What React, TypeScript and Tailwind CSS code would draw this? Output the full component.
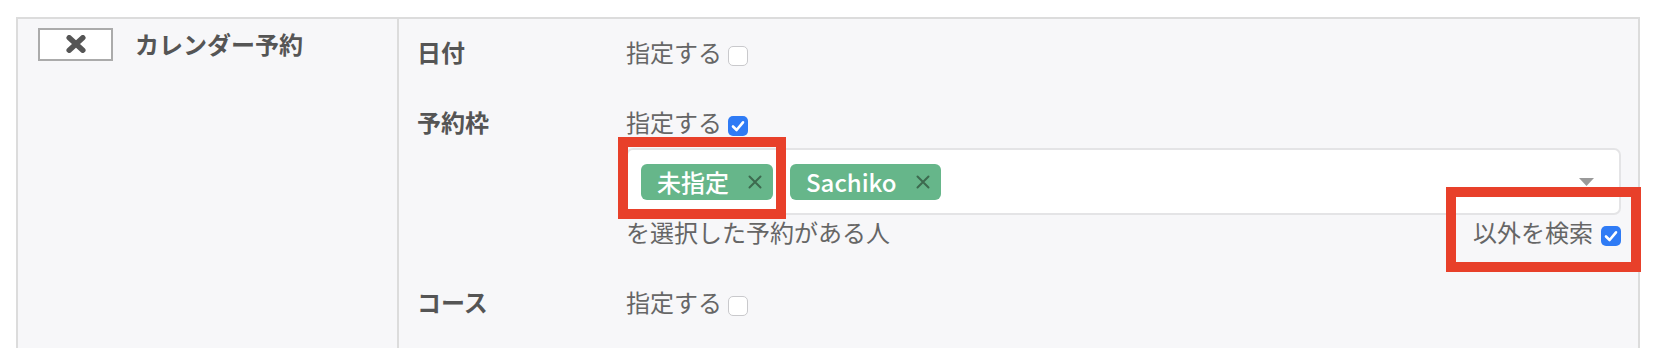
const font = { fontFamily: '"Noto Sans CJK JP", "Noto Sans", sans-serif' };

function Box({ checked = false }: { checked?: boolean }) {
  return checked ? (
    <span className="mt-[8px] grid h-[20px] w-[20px] shrink-0 place-items-center rounded-[5px] bg-[#2f7bf5]">
      <svg viewBox="0 0 20 20" className="h-[20px] w-[20px]">
        <path d="M5 10.5 L8.6 14 L15 6.3" fill="none" stroke="white" strokeWidth="2.6" strokeLinecap="round" strokeLinejoin="round" />
      </svg>
    </span>
  ) : (
    <span className="mt-[8px] h-[20px] w-[20px] shrink-0 rounded-[5px] border border-[#c9c9cc] bg-white" />
  );
}

function Chip({ label }: { label: string }) {
  return (
    <span className="flex h-[36px] items-center rounded-[6px] bg-[#66b68a] pl-[16px] pr-[11px] text-[24px] font-medium leading-none text-white">
      <span>{label}</span>
      <svg viewBox="0 0 14 14" className="ml-[19px] h-[14px] w-[14px]">
        <path d="M1.5 1.5 L12.5 12.5 M12.5 1.5 L1.5 12.5" stroke="#3d6a4f" strokeWidth="2" strokeLinecap="round" />
      </svg>
    </span>
  );
}

function Row({ label, children }: { label: string; children: React.ReactNode }) {
  return (
    <div className="flex">
      <div className="w-[209px] shrink-0 text-[24px] font-bold leading-[36px] text-[#555]">{label}</div>
      <div className="flex-1">{children}</div>
    </div>
  );
}

function Toggle({ checked = false }: { checked?: boolean }) {
  return (
    <div className="flex h-[36px] items-center gap-[6px] text-[24px] leading-[36px] text-[#666]">
      <span>指定する</span>
      <Box checked={checked} />
    </div>
  );
}

export default function App() {
  return (
    <div className="relative h-[348px] overflow-hidden bg-white pl-[16px] pt-[17px]" style={font}>
      <div className="flex h-[360px] w-[1624px] border-2 border-[#dcdcdc] bg-[#f7f7f9]">
        <div className="flex w-[379px] shrink-0 items-start pl-[20px] pt-[7px]">
          <div className="flex items-center">
            <button className="grid h-[33px] w-[75px] place-items-center border-2 border-[#ababab] bg-white">
              <svg viewBox="0 0 20 18" className="h-[18px] w-[20px]">
                <path d="M3.2 2.8 L16.8 15.2 M16.8 2.8 L3.2 15.2" stroke="#555" strokeWidth="5.5" strokeLinecap="round" />
              </svg>
            </button>
            <span className="ml-[22px] text-[24px] font-bold leading-[36px] text-[#555]">カレンダー予約</span>
          </div>
        </div>
        <div className="flex-1 border-l-2 border-[#dcdcdc] pl-[18px] pr-[17px] pt-[15px]">
          <Row label="日付">
            <Toggle />
          </Row>
          <div className="mt-[34px]">
            <Row label="予約枠">
              <Toggle checked />
              <div className="mt-[8px] flex h-[67px] items-center rounded-[7px] border-2 border-[#e4e4e6] bg-white pl-[13px] pr-[25px]">
                <div className="flex gap-[17px]">
                  <Chip label="未指定" />
                  <Chip label="Sachiko" />
                </div>
                <svg viewBox="0 0 15 8" className="ml-auto h-[8px] w-[15px]">
                  <path d="M0 0 L15 0 L7.5 8 Z" fill="#9a9a9a" />
                </svg>
              </div>
              <div className="flex h-[34px] items-center justify-between text-[24px] leading-[34px] text-[#666]">
                <span>を選択した予約がある人</span>
                <div className="flex items-center gap-[8px]">
                  <span>以外を検索</span>
                  <Box checked />
                </div>
              </div>
            </Row>
          </div>
          <div className="mt-[35px]">
            <Row label="コース">
              <Toggle />
            </Row>
          </div>
        </div>
      </div>
      <div className="pointer-events-none absolute left-[618px] top-[137px] h-[82px] w-[168px] border-[10px] border-[#e8402a]" />
      <div className="pointer-events-none absolute left-[1446px] top-[187px] h-[85px] w-[195px] border-[10px] border-[#e8402a]" />
    </div>
  );
}
